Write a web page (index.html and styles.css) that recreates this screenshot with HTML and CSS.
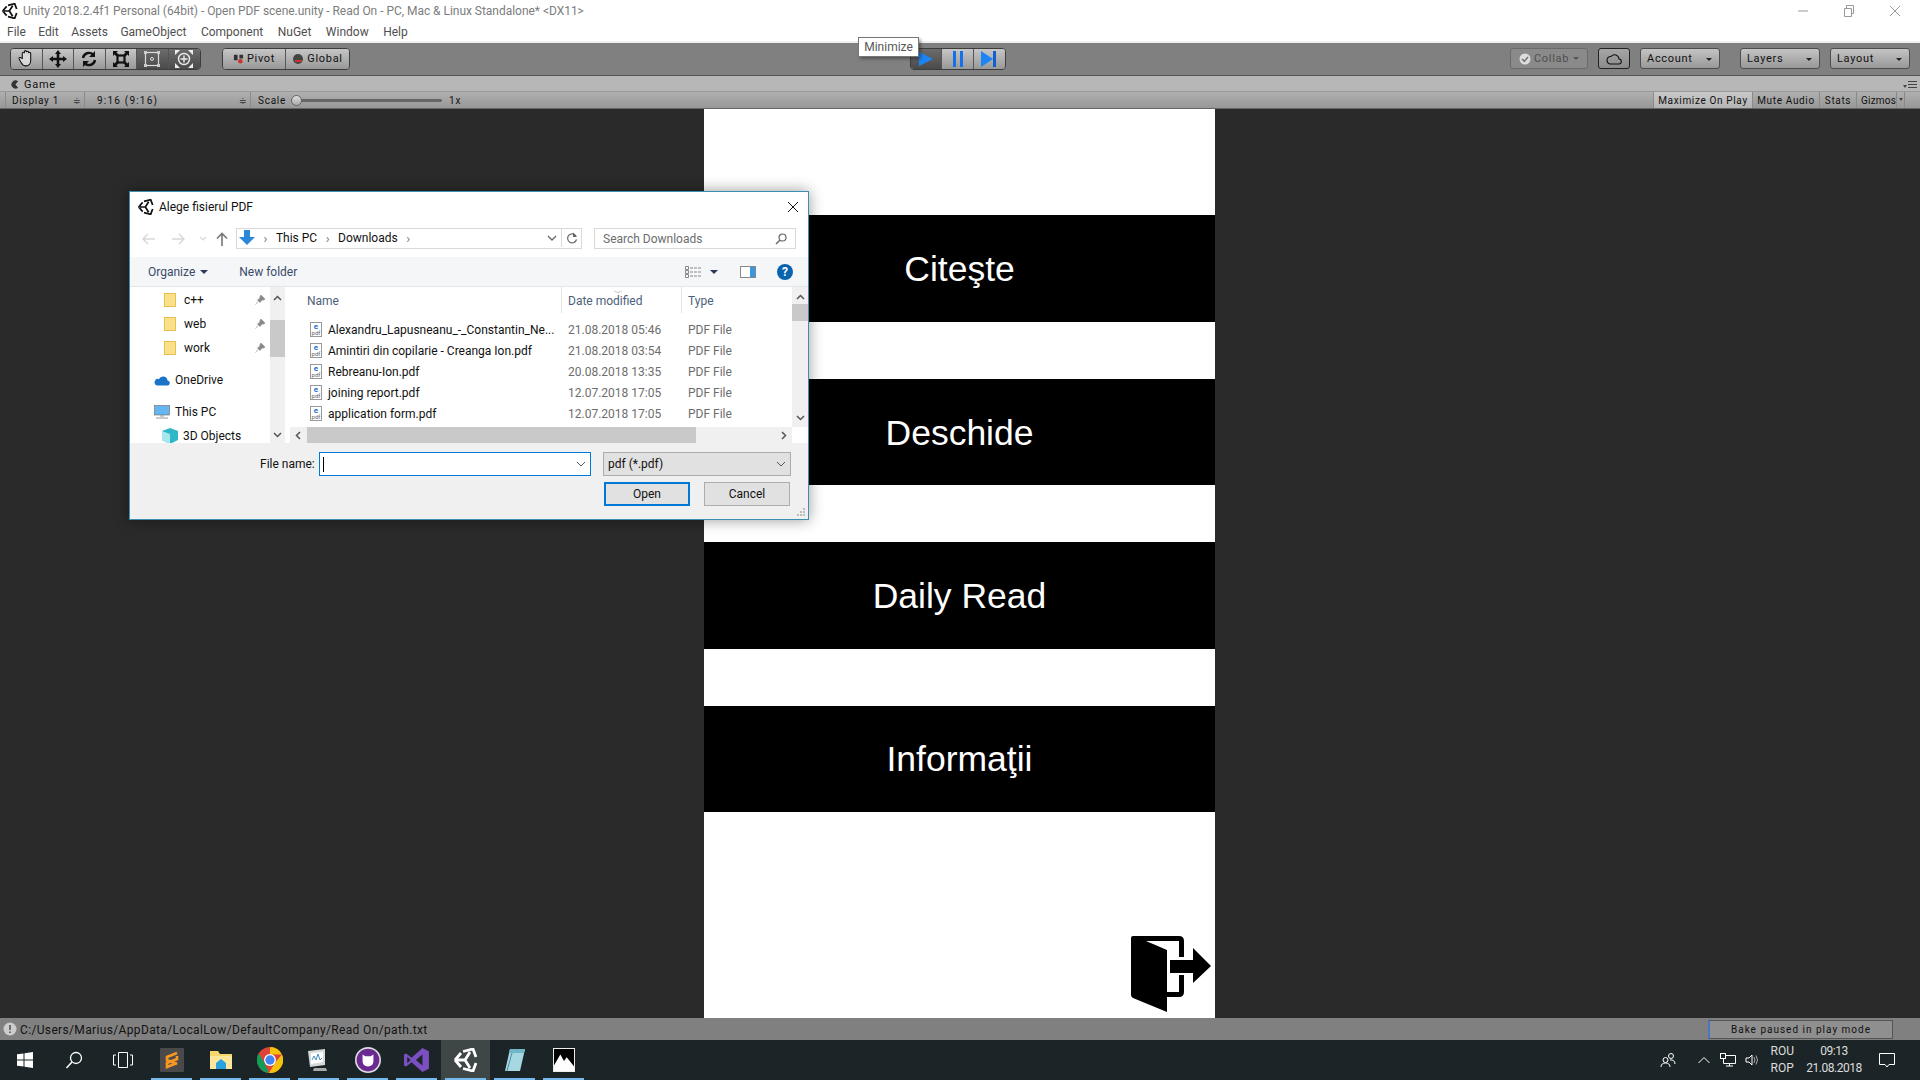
FILE: index.html
```html
<!DOCTYPE html>
<html lang="en">
<head>
<meta charset="utf-8">
<title>Unity</title>
<link rel="stylesheet" href="styles.css">
</head>
<body>
<div class="app">
  <header class="titlebar">
    <svg class="unity-logo" viewBox="0 0 24 24" width="16" height="16"><path d="M1 12 7 5M9 3.5 19 1 22 9M22 15 19 23 9 20.5M7 19 1 12M3 12H11L16 4M11 12 16 20" fill="none" stroke="#111" stroke-width="2.6"/></svg>
    <span class="title-text">Unity 2018.2.4f1 Personal (64bit) - Open PDF scene.unity - Read On - PC, Mac &amp; Linux Standalone* &lt;DX11&gt;</span>
    <div class="winctl">
      <svg width="12" height="12" viewBox="0 0 12 12"><path d="M1 6H11" stroke="#999" fill="none"/></svg>
      <svg width="12" height="12" viewBox="0 0 12 12"><path d="M1.500 3.500H8.500V11.500H1.500ZM3.500 3.500V.5H10.500V8.500H8.500" stroke="#999" fill="none"/></svg>
      <svg width="12" height="12" viewBox="0 0 12 12"><path d="M1 1 11 11M11 1 1 11" stroke="#999" fill="none"/></svg>
    </div>
  </header>
  <nav class="menubar">
    <span>File</span><span>Edit</span><span>Assets</span><span>GameObject</span><span>Component</span><span>NuGet</span><span>Window</span><span>Help</span>
  </nav>
  <div class="toolbar">
    <div class="btn-group tools">
      <button class="tool"><svg viewBox="0 0 20 20" width="21" height="21"><path d="M6 10V5a1 1 0 0 1 2 0V3.500a1 1 0 0 1 2 0V4a1 1 0 0 1 2 0v1a1 1 0 0 1 2 0v7c0 3-2 5-4.500 5S6 16 5 14L3 10.500c-.5-1.300 1-2 2-1z" fill="#d8d8d8" stroke="#111" stroke-width="1"/></svg></button>
      <button class="tool"><svg viewBox="0 0 20 20" width="20" height="20"><path d="M10 1 13 5H11.300V8.700H15V7L19 10 15 13V11.300H11.300V15H13L10 19 7 15H8.700V11.300H5V13L1 10 5 7V8.700H8.700V5H7Z" fill="#111"/></svg></button>
      <button class="tool"><svg viewBox="0 0 20 20" width="20" height="20"><path d="M4 9a6 6 0 0 1 10-3.500M16 11a6 6 0 0 1-10 3.500" fill="none" stroke="#111" stroke-width="2.400"/><path d="M16 2V8H10ZM4 18V12H10Z" fill="#111"/></svg></button>
      <button class="tool"><svg viewBox="0 0 20 20" width="20" height="20"><rect x="6.500" y="6.500" width="7" height="7" fill="none" stroke="#111" stroke-width="2.200"/><path d="M2 2H7L5.500 3.500 7.500 5.500 5.500 7.500 3.500 5.500 2 7ZM18 2V7L16.500 5.500 14.500 7.500 12.500 5.500 14.500 3.500 13 2ZM2 18V13L3.500 14.500 5.500 12.500 7.500 14.500 5.500 16.500 7 18ZM18 18H13L14.500 16.500 12.500 14.500 14.500 12.500 16.500 14.500 18 13Z" fill="#111"/></svg></button>
      <button class="tool on"><svg viewBox="0 0 20 20" width="20" height="20"><rect x="3.500" y="3.500" width="13" height="13" fill="none" stroke="#ddd" stroke-width="1.200"/><path d="M2 2H5V5H2ZM15 2H18V5H15ZM2 15H5V18H2ZM15 15H18V18H15Z" fill="#ccc"/><circle cx="10" cy="10" r="1.500" fill="none" stroke="#ddd"/></svg></button>
      <button class="tool on alt"><svg viewBox="0 0 20 20" width="20" height="20"><circle cx="10" cy="10" r="5.500" fill="none" stroke="#eee" stroke-width="1.400"/><path d="M10 6.500V13.500M6.500 10H13.500" stroke="#eee" stroke-width="1.400"/><path d="M1 1H6L1 6ZM19 1V6L14 1ZM1 19V14L6 19ZM19 19H14L19 14Z" fill="#eee"/></svg></button>
    </div>
    <div class="btn-group pivot">
      <button class="seg"><svg viewBox="0 0 12 12" width="11" height="11"><path d="M1 2H5V8H1ZM7 2H11V6H7Z" fill="#333"/><circle cx="8" cy="9" r="2.500" fill="#c33"/></svg>Pivot</button>
      <button class="seg"><svg viewBox="0 0 12 12" width="12" height="12"><circle cx="6" cy="6" r="5" fill="#444"/><path d="M3 8H10" stroke="#c33" stroke-width="2"/></svg>Global</button>
    </div>
    <div class="play-area">
      <div class="btn-group play">
        <button class="tool wide on"><svg viewBox="0 0 20 20" width="20" height="20"><path d="M3 3 17 10 3 17Z" fill="#1c84f4"/></svg></button>
        <button class="tool wide"><svg viewBox="0 0 20 20" width="20" height="20"><path d="M5 2H8V18H5ZM12 2H15V18H12Z" fill="#1471e8"/></svg></button>
        <button class="tool wide"><svg viewBox="0 0 20 20" width="20" height="20"><path d="M2 2 14 10 2 18Z" fill="#1c84f4"/><path d="M14 2H17V18H14Z" fill="#0f5fd0"/></svg></button>
      </div>
    </div>
    <button class="btn collab"><svg viewBox="0 0 12 12" width="12" height="12"><circle cx="6" cy="6" r="5.500" fill="#ddd"/><path d="M3 6 5.300 8.300 9 4" fill="none" stroke="#777" stroke-width="1.600"/></svg>Collab<i class="caret"></i></button>
    <button class="btn cloud"><svg viewBox="0 0 16 14" width="16" height="14"><path d="M4 12H12.500a2.500 2.500 0 0 0 .5-5A4.500 4.500 0 0 0 5 4.500 3.800 3.800 0 0 0 4 12Z" fill="none" stroke="#111" stroke-width="1.100"/></svg></button>
    <button class="btn drop account">Account<i class="caret"></i></button>
    <button class="btn drop layers">Layers<i class="caret"></i></button>
    <button class="btn drop layout">Layout<i class="caret"></i></button>
  </div>
  <div class="tabbar">
    <span class="tab"><svg viewBox="0 0 10 10" width="9" height="9"><path d="M9 1.500A4.500 4.500 0 1 0 9 8.500L6 5Z" fill="#333"/></svg>Game</span>
    <span class="tab-menu"><i class="caret small"></i><svg viewBox="0 0 9 7" width="9" height="7"><path d="M0 .5H9M0 3.500H9M0 6.500H9" stroke="#444" fill="none"/></svg></span>
  </div>
  <div class="gamebar">
    <span class="gb-item display">Display 1<b class="updown">≑</b></span>
    <span class="gb-item ratio">9:16 (9:16)<b class="updown">≑</b></span>
    <span class="scale">Scale<span class="slider"><i class="thumb"></i></span>1x</span>
    <span class="gb-toggle max">Maximize On Play</span>
    <span class="gb-toggle mute">Mute Audio</span>
    <span class="gb-toggle stats">Stats</span>
    <span class="gb-toggle gizmos">Gizmos<i class="giz-sep"><i class="caret small"></i></i></span>
  </div>
  <main class="gameview">
    <section class="screen">
      <div class="menu-btn">Citeşte</div>
      <div class="menu-btn">Deschide</div>
      <div class="menu-btn">Daily Read</div>
      <div class="menu-btn">Informaţii</div>
      <svg class="exit" viewBox="0 0 90 90" width="90" height="90"><path d="M8 8H54Q59 8 59 13V29H54V13H21L42 22V64H54V47H59V64Q59 69 54 69H42V84L8 70Q6 69 6 67V10Q6 8 8 8ZM45 32H68V20L86 38 68 55V45H45Z" fill="#000"/></svg>
    </section>
  </main>
  <footer class="statusbar">
    <svg viewBox="0 0 14 14" width="14" height="14"><circle cx="7" cy="7" r="6.500" fill="#ccc"/><path d="M7 3V8M7 9.500V11" stroke="#555" stroke-width="1.600"/></svg>
    <span class="status-text">C:/Users/Marius/AppData/LocalLow/DefaultCompany/Read On/path.txt</span>
    <span class="bake">Bake paused in play mode</span>
  </footer>
  <div class="taskbar">
    <div class="task-icon"><svg viewBox="0 0 16 16" width="16" height="16"><path d="M0 2.300 6.500 1.400V7.500H0ZM7.500 1.300 16 0V7.500H7.500ZM0 8.500H6.500V14.600L0 13.700ZM7.500 8.500H16V16L7.500 14.700Z" fill="#fff"/></svg></div>
    <div class="task-icon"><svg viewBox="0 0 18 18" width="18" height="18"><circle cx="11" cy="7" r="5.500" fill="none" stroke="#fff" stroke-width="1.300"/><path d="M7 11 1.500 17" stroke="#fff" stroke-width="1.500"/></svg></div>
    <div class="task-icon"><svg viewBox="0 0 20 16" width="20" height="16"><path d="M5.500 .5H14.500V15.500H5.500ZM3 3H.5V13H3M17 3H19.500V13H17" fill="none" stroke="#fff"/></svg></div>
    <div class="task-icon run"><svg viewBox="0 0 24 24" width="24" height="24"><rect width="24" height="24" rx="1" fill="#4a4a4a"/><path d="M17 5 7 9V12L17 16M17 8V11L7 15V19L17 15" fill="none" stroke="#f89820" stroke-width="2.600"/></svg></div>
    <div class="task-icon run"><svg viewBox="0 0 24 24" width="24" height="24"><path d="M1 3H9L11 6H23V21H1Z" fill="#f5d76e"/><path d="M1 8H23V21H1Z" fill="#fbe69a"/><path d="M7 15 12 11 17 15V21H7Z" fill="#2aa2e0"/></svg></div>
    <div class="task-icon run"><svg viewBox="0 0 24 24" width="26" height="26"><circle cx="12" cy="12" r="12" fill="#db4437"/><path d="M12 0A12 12 0 0 1 23 7H12Z" fill="#f4c20d"/><path d="M23 7A12 12 0 0 1 11 24L17 14Z" fill="#f4c20d"/><path d="M1.500 6 7 15 11 24A12 12 0 0 1 1.500 6Z" fill="#0f9d58"/><circle cx="12" cy="12" r="5.500" fill="#fff"/><circle cx="12" cy="12" r="4.300" fill="#4285f4"/></svg></div>
    <div class="task-icon run"><svg viewBox="0 0 24 24" width="24" height="24"><path d="M1 3 18 1V17L3 19Z" fill="#d5dad8"/><path d="M4 5 16 4V14L4 16Z" fill="#fff"/><path d="M5 12 7 8 9 12 11 6 13 12 15 10" fill="none" stroke="#4a90c2"/><path d="M7 20H19L20 23H6Z" fill="#aaa"/></svg></div>
    <div class="task-icon run"><svg viewBox="0 0 24 24" width="26" height="26"><circle cx="12" cy="12" r="12" fill="#ddd"/><circle cx="12" cy="12" r="10.500" fill="#6a2a92"/><path d="M7 7 9.500 8.500H14.500L17 7V13C17 16 15 18 12 18S7 16 7 13Z" fill="#fff"/></svg></div>
    <div class="task-icon run"><svg viewBox="0 0 24 24" width="26" height="26"><path d="M17 1 23 4V20L17 23 7 14 2 18 0 17V7L2 6 7 10Z" fill="#7b4fc0"/><path d="M17 7 11 12 17 17ZM3 9V15L6 12Z" fill="#1b2426"/></svg></div>
    <div class="task-icon run active"><svg viewBox="0 0 24 24" width="24" height="24"><path d="M1 12 7 5M9 3.500 19 1 22 9M22 15 19 23 9 20.500M7 19 1 12M3 12H11L16 4M11 12 16 20" fill="none" stroke="#fff" stroke-width="2.800"/></svg></div>
    <div class="task-icon run"><svg viewBox="0 0 24 24" width="24" height="24"><path d="M7 1H22L17 23H2Z" fill="#a6d8e2"/><path d="M7 1H22L21 5H6Z" fill="#6fb7c9"/><path d="M4 23 9 5" stroke="#4d8ea3"/></svg></div>
    <div class="task-icon run"><svg viewBox="0 0 24 26" width="22" height="24"><rect width="24" height="26" fill="#fff"/><rect x="1" y="1" width="22" height="24" fill="#000"/><path d="M1 25V19L8 7 12 14 15 10 23 20V25Z" fill="#fff"/></svg></div>
    <div class="tray">
      <svg viewBox="0 0 16 16" width="16" height="16"><circle cx="5.500" cy="8" r="2.500" fill="none" stroke="#fff"/><path d="M1 15C1 12 3 11 5.500 11S10 12 10 15" fill="none" stroke="#fff"/><circle cx="11" cy="4" r="2.500" fill="none" stroke="#fff"/><path d="M10 8C13 7.500 15 9 15 12" fill="none" stroke="#fff"/></svg>
      <svg class="chev" viewBox="0 0 12 8" width="12" height="8"><path d="M.5 7 6 1.500 11.500 7" fill="none" stroke="#fff"/></svg>
      <svg viewBox="0 0 16 14" width="16" height="14"><path d="M3.500 2.500H15.500V10.500H3.500ZM9.500 10.500V13M6 13H13" fill="none" stroke="#fff"/><rect x=".5" y=".5" width="5" height="5" fill="#1b2426" stroke="#fff"/></svg>
      <svg viewBox="0 0 16 14" width="16" height="14"><path d="M1 5H4L7 2V12L4 9H1Z" fill="none" stroke="#fff"/><path d="M9 4Q11 7 9 10M11 2.500Q14 7 11 11.500" fill="none" stroke="#aaa"/></svg>
      <div class="lang"><span>ROU</span><span>ROP</span></div>
      <div class="clock"><span>09:13</span><span>21.08.2018</span></div>
      <svg class="notif" viewBox="0 0 16 16" width="16" height="16"><path d="M.5 1.500H15.500V12.500H10L8 15 6 12.500H.5Z" fill="none" stroke="#fff"/></svg>
    </div>
  </div>
  <div class="tooltip">Minimize</div>
  <section class="dialog">
    <div class="dlg-title">
      <svg viewBox="0 0 24 24" width="16" height="16"><path d="M1 12 7 5M9 3.500 19 1 22 9M22 15 19 23 9 20.500M7 19 1 12M3 12H11L16 4M11 12 16 20" fill="none" stroke="#111" stroke-width="2.600"/></svg>
      <span>Alege fisierul PDF</span>
      <svg class="dlg-close" viewBox="0 0 10 10" width="10" height="10"><path d="M0 0 10 10M10 0 0 10" stroke="#111" fill="none"/></svg>
    </div>
    <div class="dlg-addr">
      <div class="nav-arrows">
        <svg viewBox="0 0 14 12" width="14" height="12"><path d="M1 6H13M6 1 1 6 6 11" fill="none" stroke="#d8d8d8" stroke-width="1.500"/></svg>
        <svg viewBox="0 0 14 12" width="14" height="12"><path d="M1 6H13M8 1 13 6 8 11" fill="none" stroke="#d8d8d8" stroke-width="1.500"/></svg>
        <svg viewBox="0 0 8 6" width="8" height="6"><path d="M1 1 4 4 7 1" fill="none" stroke="#d8d8d8" stroke-width="1.200"/></svg>
        <svg viewBox="0 0 12 14" width="12" height="14"><path d="M6 14V2M1 6.500 6 1.500 11 6.500" fill="none" stroke="#777" stroke-width="1.600"/></svg>
      </div>
      <div class="addr">
        <svg viewBox="0 0 16 16" width="16" height="16"><path d="M5 0H11V7H16L8 15 0 7H5Z" fill="#2b88d8"/></svg>
        <i class="bc">›</i><span>This PC</span><i class="bc">›</i><span>Downloads</span><i class="bc">›</i>
        <svg class="addr-drop" viewBox="0 0 10 6" width="10" height="6"><path d="M1 1 5 5 9 1" fill="none" stroke="#666" stroke-width="1.300"/></svg>
        <span class="refresh"><svg viewBox="0 0 12 12" width="12" height="12"><path d="M10 4A4.500 4.500 0 1 0 10.500 7.500" fill="none" stroke="#666" stroke-width="1.200"/><path d="M7 .5V5H11Z" fill="#666"/></svg></span>
      </div>
      <div class="search">
        <span>Search Downloads</span>
        <svg viewBox="0 0 12 12" width="12" height="12"><circle cx="7.500" cy="4.500" r="3.500" fill="none" stroke="#666" stroke-width="1.200"/><path d="M5 7 1 11" stroke="#666" stroke-width="1.500"/></svg>
      </div>
    </div>
    <div class="dlg-cmd">
      <span class="organize">Organize<i class="cmd-caret"></i></span>
      <span class="newfolder">New folder</span>
      <div class="cmd-right">
        <svg viewBox="0 0 16 12" width="16" height="12"><path d="M.5.5H3.500V3.500H.5ZM.5 4.500H3.500V7.500H.5ZM.5 8.500H3.500V11.500H.5Z" fill="none" stroke="#888"/><path d="M5 2H16M5 6H16M5 10H16" stroke="#888" stroke-dasharray="3 1"/></svg>
        <i class="cmd-caret dark"></i>
        <svg class="pane-ico" viewBox="0 0 16 12" width="16" height="12"><rect x=".5" y=".5" width="15" height="11" fill="#fff" stroke="#888"/><rect x="10" y="1" width="5" height="10" fill="#3a96dd"/></svg>
        <span class="help">?</span>
      </div>
    </div>
    <div class="dlg-body">
      <aside class="navtree">
        <div class="tree-row pinned"><i class="folder"></i>c++<svg class="pin" viewBox="0 0 10 10" width="10" height="10"><path d="M6 0 10 4 8.500 5 7 5 5 7.500 2.500 5 5 3V1.500ZM3 6.500 .5 9.500" fill="#888" stroke="#888" stroke-width=".6"/></svg></div>
        <div class="tree-row pinned"><i class="folder"></i>web<svg class="pin" viewBox="0 0 10 10" width="10" height="10"><path d="M6 0 10 4 8.500 5 7 5 5 7.500 2.500 5 5 3V1.500ZM3 6.500 .5 9.500" fill="#888" stroke="#888" stroke-width=".6"/></svg></div>
        <div class="tree-row pinned"><i class="folder"></i>work<svg class="pin" viewBox="0 0 10 10" width="10" height="10"><path d="M6 0 10 4 8.500 5 7 5 5 7.500 2.500 5 5 3V1.500ZM3 6.500 .5 9.500" fill="#888" stroke="#888" stroke-width=".6"/></svg></div>
        <div class="tree-row root gap"><svg viewBox="0 0 16 11" width="16" height="11"><path d="M3 10.500H13a2.500 2.500 0 0 0 .5-5A4.500 4.500 0 0 0 5 4 3.300 3.300 0 0 0 3 10.500Z" fill="#1a73c9"/></svg>OneDrive</div>
        <div class="tree-row root gap"><svg viewBox="0 0 16 14" width="16" height="14"><rect x=".5" y=".5" width="15" height="9.500" fill="#64b5f0" stroke="#666" stroke-width=".6"/><path d="M6 11H10M2 13H14" stroke="#999"/></svg>This PC</div>
        <div class="tree-row child"><svg viewBox="0 0 16 16" width="16" height="16"><path d="M8 0 16 3V12L8 16 0 12V3Z" fill="#2fb6c7"/><path d="M0 3 8 6V16L0 12Z" fill="#a8e6ee"/></svg>3D Objects</div>
      </aside>
      <div class="nav-scroll">
        <svg viewBox="0 0 9 6" width="9" height="6"><path d="M1 5 4.500 1.500 8 5" fill="none" stroke="#555" stroke-width="1.500"/></svg>
        <i class="nav-thumb"></i>
        <svg viewBox="0 0 9 6" width="9" height="6"><path d="M1 1 4.500 4.500 8 1" fill="none" stroke="#555" stroke-width="1.500"/></svg>
      </div>
      <div class="filepane">
        <div class="files-wrap">
          <div class="files">
            <div class="file-head">
              <span class="col name">Name</span>
              <span class="col date">Date modified<i class="sort"></i></span>
              <span class="col type">Type</span>
            </div>
            <div class="file-row"><span class="fname"><i class="pdf"><b>e</b>pdf</i>Alexandru_Lapusneanu_-_Constantin_Ne...</span><span class="fdate">21.08.2018 05:46</span><span class="ftype">PDF File</span></div>
            <div class="file-row"><span class="fname"><i class="pdf"><b>e</b>pdf</i>Amintiri din copilarie - Creanga Ion.pdf</span><span class="fdate">21.08.2018 03:54</span><span class="ftype">PDF File</span></div>
            <div class="file-row"><span class="fname"><i class="pdf"><b>e</b>pdf</i>Rebreanu-Ion.pdf</span><span class="fdate">20.08.2018 13:35</span><span class="ftype">PDF File</span></div>
            <div class="file-row"><span class="fname"><i class="pdf"><b>e</b>pdf</i>joining report.pdf</span><span class="fdate">12.07.2018 17:05</span><span class="ftype">PDF File</span></div>
            <div class="file-row"><span class="fname"><i class="pdf"><b>e</b>pdf</i>application form.pdf</span><span class="fdate">12.07.2018 17:05</span><span class="ftype">PDF File</span></div>
          </div>
          <div class="v-scroll">
            <svg viewBox="0 0 9 6" width="9" height="6"><path d="M1 5 4.500 1.500 8 5" fill="none" stroke="#555" stroke-width="1.500"/></svg>
            <i class="v-thumb"></i>
            <svg class="v-down" viewBox="0 0 9 6" width="9" height="6"><path d="M1 1 4.500 4.500 8 1" fill="none" stroke="#555" stroke-width="1.500"/></svg>
          </div>
        </div>
        <div class="h-scroll">
          <svg viewBox="0 0 6 9" width="6" height="9"><path d="M5 1 1.500 4.500 5 8" fill="none" stroke="#555" stroke-width="1.500"/></svg>
          <i class="h-thumb"></i>
          <svg viewBox="0 0 6 9" width="6" height="9"><path d="M1 1 4.500 4.500 1 8" fill="none" stroke="#555" stroke-width="1.500"/></svg>
        </div>
      </div>
    </div>
    <div class="dlg-foot">
      <div class="foot-row">
        <label class="fn-label">File name:</label>
        <div class="fn-input"><i class="cursor"></i><svg viewBox="0 0 10 6" width="10" height="6"><path d="M1 1 5 5 9 1" fill="none" stroke="#555"/></svg></div>
        <div class="filter">pdf (*.pdf)<svg viewBox="0 0 10 6" width="10" height="6"><path d="M1 1 5 5 9 1" fill="none" stroke="#555"/></svg></div>
      </div>
      <div class="foot-btns">
        <button class="dbtn primary">Open</button>
        <button class="dbtn">Cancel</button>
      </div>
      <svg class="grip" viewBox="0 0 8 8" width="8" height="8"><path d="M6 0H8V2H6ZM3 3H5V5H3ZM6 3H8V5H6ZM0 6H2V8H0ZM3 6H5V8H3ZM6 6H8V8H6Z" fill="#bbb"/></svg>
    </div>
  </section>
</div>
</body>
</html>
```
FILE: styles.css
```css
* { box-sizing: border-box; }
html, body { margin: 0; padding: 0; }
body { width: 1920px; height: 1080px; overflow: hidden; font-family: Roboto, "Liberation Sans", sans-serif; }
i { font-style: normal; display: block; }
button { font: inherit; margin: 0; padding: 0; }
.app { position: relative; width: 1920px; height: 1080px; display: flex; flex-direction: column; background: #2a2a2a; }

.titlebar { height: 22px; background: #fff; display: flex; align-items: center; padding: 1px 0 0 2px; gap: 5px; font-size: 12px; color: #7d7d7d; }
.title-text { letter-spacing: -.03px; white-space: nowrap; }
.winctl { margin-left: auto; display: flex; gap: 34px; padding-right: 19px; }
.menubar { height: 21px; background: #fff; display: flex; align-items: center; padding: 2px 0 0 7px; gap: 12.5px; font-size: 12px; color: #4f4f4f; border-bottom: 2px solid #f0f0f0; }
.menubar span:nth-child(n+5) { margin-left: 2px; }

.toolbar { height: 33px; background: #808080; display: flex; align-items: center; padding: 0 10px; border-bottom: 1px solid #555; color: #111; font-size: 11px; letter-spacing: .7px; }
.btn-group { display: flex; height: 22px; border: 1px solid #3d3d3d; border-radius: 4px; overflow: hidden; background: linear-gradient(#c8c8c8, #979797); }
.tool { width: 32px; height: 100%; border: 0; border-right: 1px solid #555; background: linear-gradient(#c6c6c6, #989898); display: flex; align-items: center; justify-content: center; }
.tool:last-child { border-right: 0; }
.tool.on { background: linear-gradient(#6c6c6c, #4a4a4a); }
.tools { width: 191px; }
.pivot { width: 128px; margin-left: 21px; }
.seg { width: 64px; border: 0; border-right: 1px solid #555; background: linear-gradient(#c6c6c6, #989898); display: flex; align-items: center; justify-content: center; gap: 3px; color: #111; letter-spacing: .7px; }
.seg:last-child { border-right: 0; }
.play-area { width: 656px; display: flex; justify-content: flex-end; margin-right: 504px; }
.play { width: 96px; }
.tool.wide { width: 32px; }
.btn { height: 21px; border: 1px solid #4e4e4e; border-radius: 3px; background: linear-gradient(#c4c4c4, #989898); color: #111; display: flex; align-items: center; letter-spacing: .7px; position: relative; }
.collab { width: 78px; padding-left: 8px; gap: 3px; background: #8a8a8a; color: #4f4f4f; border-color: #6a6a6a; }
.cloud { width: 32px; margin-left: 10px; justify-content: center; border-color: #222; background: linear-gradient(#a6a6a6, #8a8a8a); }
.drop { width: 80px; padding-left: 6px; }
.account { margin-left: 10px; }
.layers { margin-left: 20px; }
.layout { margin-left: 10px; }
.caret { width: 0; height: 0; border-left: 3px solid transparent; border-right: 3px solid transparent; border-top: 3px solid #222; }
.drop .caret { position: absolute; right: 7px; top: 9px; }
.collab .caret { border-top-color: #555; margin-left: 1px; }
.caret.small { border-left-width: 2px; border-right-width: 2px; border-top-color: #444; }

.tabbar { height: 16px; background: #b7b7b7; border-bottom: 1px solid #999; display: flex; align-items: center; justify-content: space-between; padding: 2px 3px 0 10px; font-size: 11px; letter-spacing: .7px; color: #111; }
.tab { display: flex; align-items: center; gap: 5px; }
.tab-menu { display: flex; align-items: flex-end; gap: 1px; }
.gamebar { height: 18px; display: flex; align-items: center; background: linear-gradient(#b0b0b0, #979797); border-bottom: 1px solid #666; font-size: 10px; letter-spacing: .65px; color: #111; white-space: nowrap; padding: 0 15px 0 5px; }
.gb-item { display: flex; align-items: center; justify-content: space-between; height: 100%; border-right: 1px solid #8a8a8a; border-left: 1px solid #8a8a8a; letter-spacing: .75px; }
.display { width: 80px; padding: 2px 2px 0 6px; }
.ratio { width: 166px; padding: 2px 2px 0 12px; border-left: 0; letter-spacing: 1.2px; }
.updown { font-weight: 400; font-size: 9px; color: #444; }
.scale { display: flex; align-items: center; margin-left: 7px; flex: 1; height: 100%; padding-top: 2px; letter-spacing: .75px; }
.slider { position: relative; width: 151px; height: 3px; background: #666; border-radius: 2px; margin: 0 7px 0 5px; }
.thumb { position: absolute; left: 0; top: -4px; width: 11px; height: 11px; border-radius: 50%; border: 1px solid #666; background: linear-gradient(#ddd, #aaa); }
.gb-toggle { height: 100%; display: flex; align-items: center; justify-content: center; border-left: 1px solid #8a8a8a; padding-top: 2px; }
.max { width: 99px; background: linear-gradient(#c8c8c8, #b4b4b4); }
.mute { width: 67px; }
.stats { width: 37px; }
.gizmos { width: 49px; justify-content: flex-start; padding-left: 4px; border-right: 1px solid #8a8a8a; letter-spacing: .2px; position: relative; }
.giz-sep { position: absolute; right: 0; top: 0; bottom: 0; width: 8px; border-left: 1px solid #8a8a8a; display: flex; justify-content: center; padding-top: 6px; }

.gameview { height: 909px; flex: none; display: flex; justify-content: center; background: #2a2a2a; }
.screen { width: 511px; margin-left: -1px; background: #fff; display: flex; flex-direction: column; padding-top: 106px; gap: 57px; position: relative; }
.menu-btn { height: 106.4px; flex: none; background: #000; color: #fff; display: flex; align-items: center; justify-content: center; padding-top: 2px; font-family: "Liberation Sans", Arial, sans-serif; font-size: 35.500px; }
.exit { position: absolute; right: 0; bottom: 0; }

.statusbar { height: 22px; background: #808080; display: flex; align-items: center; padding-left: 3px; gap: 3px; color: #111; font-size: 12px; letter-spacing: .35px; }
.status-text { white-space: nowrap; padding-top: 2px; }
.bake { margin-left: auto; margin-right: 27px; width: 185px; height: 19px; border: 1px solid #555; border-left: 2px solid #4a78c0; background: #8f8f8f; display: flex; align-items: center; justify-content: center; font-size: 10px; letter-spacing: 1px; }

.taskbar { height: 40px; background: #1b2426; display: flex; align-items: stretch; color: #fff; }
.task-icon { width: 49px; flex: none; display: flex; align-items: center; justify-content: center; position: relative; }
.task-icon.run::after { content: ""; position: absolute; left: 4px; right: 4px; bottom: 0; height: 2px; background: #76b9ed; }
.task-icon.active { background: #3f4646; }
.tray { margin-left: auto; display: flex; align-items: center; padding-right: 25px; }
.tray .chev { margin-left: 22px; }
.tray svg:nth-child(3) { margin-left: 10px; }
.tray svg:nth-child(4) { margin-left: 9px; }
.lang { display: flex; flex-direction: column; font-size: 12px; line-height: 17px; margin-left: 10px; color: #ddd; }
.clock { display: flex; flex-direction: column; align-items: center; font-size: 12px; line-height: 17px; margin-left: 12px; width: 56px; color: #ddd; letter-spacing: -.5px; }
.notif { margin-left: 17px; }

.tooltip { position: absolute; left: 858px; top: 37px; width: 61px; height: 20px; background: #fff; border: 1px solid #767676; box-shadow: 2px 2px 3px rgba(0,0,0,.35); font-size: 12px; color: #575757; display: flex; align-items: center; justify-content: center; }

.dialog { position: absolute; left: 129px; top: 191px; width: 680px; height: 329px; background: #fff; border: 1px solid #3c8fb0; box-shadow: 0 0 14px rgba(0,0,0,.4); display: flex; flex-direction: column; font-size: 12px; color: #111; }
.dlg-title { height: 36px; flex: none; display: flex; align-items: center; padding: 0 0 6px 8px; gap: 5px; }
.dlg-close { margin-left: auto; margin-right: 10px; }
.dlg-addr { height: 29px; flex: none; display: flex; align-items: flex-start; padding-left: 12px; }
.nav-arrows { display: flex; align-items: center; width: 94px; height: 21px; gap: 15px; }
.nav-arrows svg:nth-child(3) { margin-left: -1px; margin-right: -6px; }
.addr { width: 346px; height: 21px; border: 1px solid #d9d9d9; display: flex; align-items: center; padding: 0 0 1px 2px; gap: 8.5px; position: relative; }
.bc { color: #777; font-size: 13px; line-height: 1; }
.addr-drop { margin-left: auto; margin-right: 4px; }
.refresh { width: 20px; height: 100%; border-left: 1px solid #d9d9d9; display: flex; align-items: center; justify-content: center; margin-left: -8.5px; }
.search { width: 202px; height: 21px; border: 1px solid #d9d9d9; margin-left: 12px; display: flex; align-items: center; justify-content: space-between; padding: 0 8px; color: #6d6d6d; }
.dlg-cmd { height: 30px; flex: none; background: #f5f6f7; border-bottom: 1px solid #e6e6e6; display: flex; align-items: center; padding: 0 0 0 18px; color: #3b4a6b; }
.organize { display: flex; align-items: center; gap: 5px; }
.cmd-caret { width: 0; height: 0; border-left: 4px solid transparent; border-right: 4px solid transparent; border-top: 4px solid #2a3a5e; }
.newfolder { margin-left: 31px; }
.cmd-right { margin-left: auto; display: flex; align-items: center; padding-right: 15px; }
.cmd-right .cmd-caret { margin-left: 9px; }
.pane-ico { margin-left: 22px; }
.help { width: 16px; height: 16px; border-radius: 50%; background: #0a64ad; color: #fff; font-weight: 700; font-size: 12px; display: flex; align-items: center; justify-content: center; margin-left: 21px; }
.dlg-body { height: 156px; flex: none; display: flex; overflow: hidden; background: #fff; }
.navtree { width: 140px; flex: none; overflow: hidden; padding-top: 1px; }
.tree-row { height: 24px; display: flex; align-items: center; position: relative; }
.pinned { padding-left: 34px; }
.folder { width: 12px; height: 14px; background: #fbe08c; border: 1px solid #e8bf49; margin-right: 8px; }
.pin { position: absolute; left: 125px; top: 7px; }
.root { padding-left: 24px; gap: 5px; }
.gap { margin-top: 8px; }
.child { padding-left: 32px; gap: 5px; }
.nav-scroll { width: 15px; flex: none; background: #f0f0f0; display: flex; flex-direction: column; align-items: center; padding-top: 8px; position: relative; }
.nav-thumb { width: 15px; height: 37px; background: #c9c9c9; margin-top: 19px; }
.nav-scroll svg:last-child { margin-top: auto; margin-bottom: 5px; }
.filepane { width: 518px; margin-left: 5px; flex: none; display: flex; flex-direction: column; }
.files-wrap { height: 140px; flex: none; display: flex; }
.files { width: 502px; flex: none; overflow: hidden; }
.file-head { display: grid; grid-template-columns: 272px 120px 110px; height: 26px; margin-bottom: 6px; color: #4c607a; }
.col { display: flex; align-items: center; padding: 2px 0 0 6px; border-right: 1px solid #e5e5e5; position: relative; }
.col.name { padding-left: 17px; }
.col.type { border-right: 0; }
.sort { position: absolute; left: 53px; top: 1px; width: 6px; height: 6px; border-right: 1px solid #aaa; border-bottom: 1px solid #aaa; transform: scaleY(.5) rotate(45deg); }
.file-row { display: grid; grid-template-columns: 272px 120px 110px; height: 21px; align-items: center; white-space: nowrap; }
.fname { display: flex; align-items: center; padding-left: 20px; gap: 6px; overflow: hidden; }
.fdate, .ftype { padding-left: 6px; color: #6d6d6d; }
.pdf { width: 12px; height: 15px; border: 1px solid #999; background: #fff; font-size: 6px; line-height: 6px; color: #666; text-align: center; flex: none; overflow: hidden; }
.pdf b { display: block; color: #1a73c9; font-size: 8px; line-height: 7px; }
.v-scroll { width: 16px; flex: none; background: #f0f0f0; display: flex; flex-direction: column; align-items: center; padding-top: 7px; }
.v-thumb { width: 16px; height: 17px; background: #c9c9c9; margin-top: 4px; }
.v-down { margin-top: auto; margin-bottom: 6px; }
.h-scroll { height: 16px; width: 502px; background: #f0f0f0; display: flex; align-items: center; padding: 0 5px; position: relative; }
.h-thumb { position: absolute; left: 17px; top: 0; width: 389px; height: 100%; background: #c9c9c9; }
.h-scroll svg:last-child { margin-left: auto; }
.dlg-foot { flex: 1; background: #f0f0f0; position: relative; padding-top: 9px; }
.foot-row { display: flex; align-items: center; height: 24px; }
.fn-label { margin-left: 130px; width: 59px; flex: none; white-space: nowrap; }
.fn-input { width: 272px; height: 24px; border: 1px solid #0078d7; background: #fff; display: flex; align-items: center; justify-content: space-between; padding: 0 4px 0 3px; }
.cursor { width: 1px; height: 15px; background: #000; }
.filter { width: 188px; height: 24px; margin-left: 12px; border: 1px solid #adadad; background: #e1e1e1; display: flex; align-items: center; justify-content: space-between; padding: 0 4px 0 4px; }
.foot-btns { display: flex; gap: 14px; padding-left: 474px; margin-top: 6px; }
.dbtn { width: 86px; height: 24px; border: 1px solid #adadad; background: #e1e1e1; color: #111; font-size: 12px; }
.dbtn.primary { border: 2px solid #0078d7; }
.grip { position: absolute; right: 3px; bottom: 3px; }
```
